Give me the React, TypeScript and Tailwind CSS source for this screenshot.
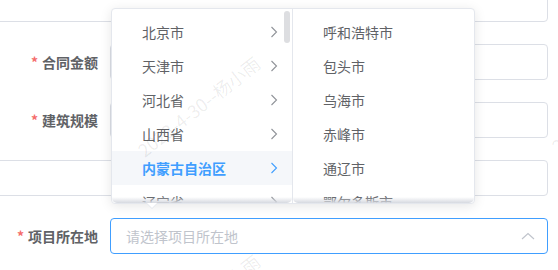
import React from 'react';

const provinces = ['北京市', '天津市', '河北省', '山西省', '内蒙古自治区', '辽宁省'];
const cities = ['呼和浩特市', '包头市', '乌海市', '赤峰市', '通辽市', '鄂尔多斯市'];

const Chevron = ({ active }: { active?: boolean }) => (
  <svg width="8" height="12" viewBox="0 0 8 12" fill="none">
    <path d="M1.5 1 L6.5 6 L1.5 11" stroke={active ? '#409eff' : '#909399'} strokeWidth="1.1" />
  </svg>
);

const Label = ({ text }: { text: string }) => (
  <div className="w-[110px] shrink-0 pr-[12px] text-right text-[14px] font-bold text-[#606266]">
    <span className="mr-[4px] text-[#f56c6c]">*</span>
    {text}
  </div>
);

const Input = ({ className = '' }: { className?: string }) => (
  <div className={`h-[36px] flex-1 rounded-[4px] border border-[#dcdfe6] bg-white ${className}`} />
);

const Watermark = ({ className }: { className: string }) => (
  <span
    className={`pointer-events-none absolute whitespace-nowrap text-[18px] leading-[24px] text-[rgba(0,0,0,0.08)] ${className}`}
  >
    2023-4-30--杨小雨
  </span>
);

export default function App() {
  return (
    <div className="relative h-[270px] w-[558px] overflow-hidden bg-white font-['Noto_Sans_CJK_SC',sans-serif]">
      <div className="mt-[-14px] flex flex-col gap-[22px] pr-[10px]">
        <div className="flex items-center">
          <Input className="ml-[-10px]" />
        </div>
        <div className="flex items-center">
          <Label text="合同金额" />
          <Input />
        </div>
        <div className="flex items-center">
          <Label text="建筑规模" />
          <Input />
        </div>
        <div className="flex items-center">
          <Input className="ml-[-10px]" />
        </div>
        <div className="flex items-center">
          <Label text="项目所在地" />
          <div className="flex h-[36px] flex-1 items-center justify-between rounded-[4px] border border-[#409eff] bg-white pl-[15px] pr-[12px]">
            <span className="text-[14px] text-[#c0c4cc]">请选择项目所在地</span>
            <svg width="14" height="8" viewBox="0 0 14 8" fill="none">
              <path d="M1 7 L7 1.5 L13 7" stroke="#c0c4cc" strokeWidth="1.2" />
            </svg>
          </div>
        </div>
      </div>

      {/* cascader dropdown */}
      <div className="absolute left-[111px] top-[8px] flex h-[196px] w-[364px] rounded-[4px] border border-[#e4e7ed] bg-white shadow-[0_2px_12px_rgba(0,0,0,0.1)]">
        <div className="relative h-full w-[181px] overflow-hidden border-r border-[#e4e7ed]">
          <div className="pt-[6px]">
            {provinces.map((p, i) => {
              const active = i === 4;
              return (
                <div
                  key={p}
                  className={`flex h-[34px] items-center justify-between pl-[30px] pr-[14px] text-[14px] ${
                    active ? 'bg-[#f5f7fa] font-bold text-[#409eff]' : 'text-[#606266]'
                  }`}
                >
                  <span>{p}</span>
                  <Chevron active={active} />
                </div>
              );
            })}
          </div>
          <div className="absolute right-[2px] top-[2px] h-[32px] w-[6px] rounded-full bg-[#dddee1]" />
          <div className="absolute bottom-0 left-0 h-[6px] w-full rounded-b-[5px] bg-gradient-to-b from-[rgba(220,223,230,0)] to-[#d6d9e0]" />
        </div>
        <div className="relative h-full flex-1 overflow-hidden">
          <div className="pt-[6px]">
            {cities.map((c) => (
              <div key={c} className="flex h-[34px] items-center pl-[30px] text-[14px] text-[#606266]">
                {c}
              </div>
            ))}
          </div>
          <div className="absolute bottom-0 left-0 h-[6px] w-full rounded-b-[5px] bg-gradient-to-b from-[rgba(220,223,230,0)] to-[#d6d9e0]" />
        </div>
        <div className="absolute bottom-[-6px] left-[34px] h-0 w-0 border-x-[6px] border-t-[6px] border-x-transparent border-t-[#e4e7ed]" />
        <div className="absolute bottom-[-5px] left-[35px] h-0 w-0 border-x-[5px] border-t-[5px] border-x-transparent border-t-white" />
      </div>

      <Watermark className="left-[124px] top-[94px] -rotate-[38deg]" />
      <Watermark className="left-[538px] top-[90px] -rotate-[38deg]" />
      <Watermark className="left-[124px] top-[292px] -rotate-[38deg]" />
    </div>
  );
}
